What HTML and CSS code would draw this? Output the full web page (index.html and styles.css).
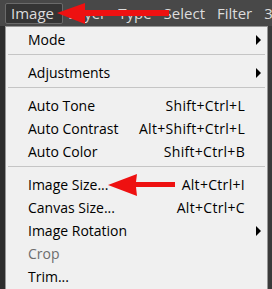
FILE: index.html
```html
<!DOCTYPE html>
<html lang="en">
<head>
    <meta charset="UTF-8">
    <title>Image menu</title>
    <link rel="stylesheet" href="styles.css">
</head>
<body>

<div class="menubar">
    <span class="menubar-item active">Image</span>
    <span class="menubar-item">Layer</span>
    <span class="menubar-item">Type</span>
    <span class="menubar-item">Select</span>
    <span class="menubar-item">Filter</span>
    <span class="menubar-item">3</span>
</div>

<div class="workspace">
    <div class="side side-left"></div>

    <div class="menu">
        <div class="item"><span>Mode</span><span></span><span class="sub"></span></div>
        <div class="sep"></div>
        <div class="item"><span>Adjustments</span><span></span><span class="sub"></span></div>
        <div class="sep"></div>
        <div class="item"><span>Auto Tone</span><span class="key">Shift+Ctrl+L</span><span></span></div>
        <div class="item"><span>Auto Contrast</span><span class="key">Alt+Shift+Ctrl+L</span><span></span></div>
        <div class="item"><span>Auto Color</span><span class="key">Shift+Ctrl+B</span><span></span></div>
        <div class="sep"></div>
        <div class="item"><span>Image Size...</span><span class="key">Alt+Ctrl+I</span><span></span></div>
        <div class="item"><span>Canvas Size...</span><span class="key">Alt+Ctrl+C</span><span></span></div>
        <div class="item"><span>Image Rotation</span><span></span><span class="sub"></span></div>
        <div class="item disabled"><span>Crop</span><span></span><span></span></div>
        <div class="item"><span>Trim...</span><span></span><span></span></div>
    </div>

    <div class="side side-right"></div>
</div>

<!-- annotation arrows -->
<svg class="arrow arrow-top" width="120" height="24" viewBox="0 0 120 24">
    <polygon points="0,12 28,2 28,9 112,9 112,15 28,15 28,23" fill="#ee1111"/>
</svg>
<svg class="arrow arrow-size" width="70" height="24" viewBox="0 0 70 24">
    <polygon points="0,12 29,1 28,9 67,9 67,14 28,14 29,23" fill="#ee1111"/>
</svg>

</body>
</html>
```

FILE: styles.css
```css
body {
    margin: 0;
    width: 272px;
    height: 289px;
    overflow: hidden;
    position: relative;
    background-color: #2b2b2b;
    font-family: "Open Sans", "Noto Sans", sans-serif;
}

/* top menu bar */
.menubar {
    height: 26px;
    display: flex;
    align-items: center;
    padding-left: 5px;
    background-color: #484848;
    font-size: 15px;
    color: #dcdcdc;
    white-space: nowrap;
}

.menubar-item {
    padding: 0 7px 0 5px;
    line-height: 19px;
}

.menubar-item.active {
    background-color: #343434;
    border: 1px solid #6a6a6a;
    border-radius: 2px;
    padding-right: 8px;
}

/* dropdown */
.workspace {
    display: flex;
    height: 263px;
}

.side {
    background-color: #2d2d2d;
}

.side-left {
    width: 5px;
}

.side-right {
    width: 4px;
    background-color: #3a3a3a;
}

.menu {
    flex: 1;
    background-color: #f0f0f0;
    border: 1px solid #979797;
    border-bottom: none;
    padding-top: 1px;
    font-size: 14px;
    color: #000;
}

.item {
    display: grid;
    grid-template-columns: 1fr auto 22px;
    align-items: center;
    height: 23px;
    padding-left: 22px;
}

.item.disabled {
    color: #6d6d6d;
}

.key {
    text-align: right;
    letter-spacing: 0.3px;
}

.sub {
    justify-self: center;
    width: 0;
    height: 0;
    border-top: 5px solid transparent;
    border-bottom: 5px solid transparent;
    border-left: 5px solid #000;
    margin-left: 4px;
}

.sep {
    height: 1px;
    margin: 3px 2px 6px 2px;
    background-color: #c5c5c5;
}

/* red annotation arrows */
.arrow {
    position: absolute;
}

.arrow-top {
    left: 57px;
    top: 1px;
}

.arrow-size {
    left: 108px;
    top: 173px;
}
```
